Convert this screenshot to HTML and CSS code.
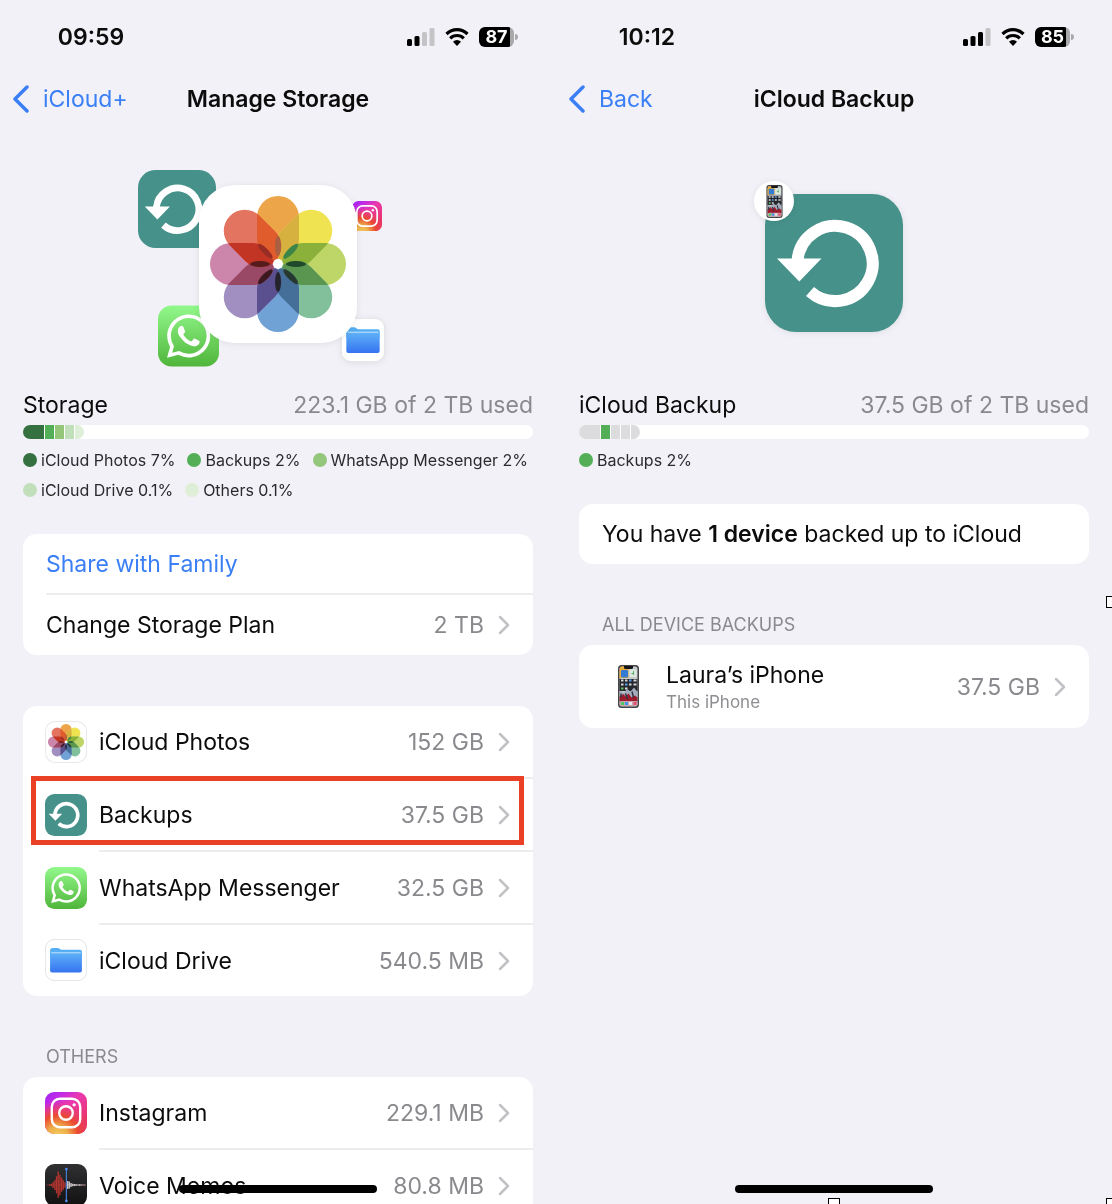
FILE: index.html
```html
<!DOCTYPE html>
<html lang="en">
<head>
    <meta charset="utf-8">
    <meta name="viewport" content="width=device-width, initial-scale=1">
    <title>iCloud Storage</title>
    <link rel="stylesheet" href="styles.css">
</head>
<body>
    <!-- shared icons -->
    <svg class="sprite" width="0" height="0" aria-hidden="true">
        <defs>
            <linearGradient id="wa-green" x1="0" y1="0" x2="0" y2="1">
                <stop offset="0" stop-color="#92f88b"/>
                <stop offset="1" stop-color="#50b53a"/>
            </linearGradient>
            <linearGradient id="folder-blue" x1="0" y1="0" x2="0" y2="1">
                <stop offset="0" stop-color="#62b5f8"/>
                <stop offset="1" stop-color="#3573f0"/>
            </linearGradient>
            <linearGradient id="ig-base" x1="0" y1="0" x2="0.7" y2="0.9">
                <stop offset="0" stop-color="#9a22f5"/>
                <stop offset="0.25" stop-color="#c32ae6"/>
                <stop offset="0.5" stop-color="#ea39ae"/>
                <stop offset="1" stop-color="#ea3462"/>
            </linearGradient>
            <radialGradient id="ig-glow" cx="0.3" cy="1.05" r="0.85">
                <stop offset="0" stop-color="#f3cb5c"/>
                <stop offset="0.28" stop-color="#eeb04c"/>
                <stop offset="0.58" stop-color="#ea4a30"/>
                <stop offset="1" stop-color="#ea3a70" stop-opacity="0"/>
            </radialGradient>
            <linearGradient id="memo-black" x1="0" y1="0" x2="0" y2="1">
                <stop offset="0" stop-color="#303032"/>
                <stop offset="1" stop-color="#111112"/>
            </linearGradient>
            <clipPath id="next-petal">
                <rect x="-21" y="-68" width="42" height="64" rx="21" transform="rotate(45)"/>
            </clipPath>
            <symbol id="photos" viewBox="0 0 158 158">
                <rect width="158" height="158" rx="36" fill="#fff"/>
                <g transform="translate(79 79)">
                    <rect x="-21" y="-68" width="42" height="64" rx="21" fill="#eda549"/>
                    <rect x="-21" y="-68" width="42" height="64" rx="21" fill="#f0e352" transform="rotate(45)"/>
                    <rect x="-21" y="-68" width="42" height="64" rx="21" fill="#bdd667" transform="rotate(90)"/>
                    <rect x="-21" y="-68" width="42" height="64" rx="21" fill="#82c09b" transform="rotate(135)"/>
                    <rect x="-21" y="-68" width="42" height="64" rx="21" fill="#70a2d6" transform="rotate(180)"/>
                    <rect x="-21" y="-68" width="42" height="64" rx="21" fill="#a08fc0" transform="rotate(225)"/>
                    <rect x="-21" y="-68" width="42" height="64" rx="21" fill="#cd86ab" transform="rotate(270)"/>
                    <rect x="-21" y="-68" width="42" height="64" rx="21" fill="#e37460" transform="rotate(315)"/>
                    <!-- where neighbouring petals overlap -->
                    <g clip-path="url(#next-petal)"><rect x="-21" y="-68" width="42" height="64" rx="21" fill="#d6b13f"/></g>
                    <g clip-path="url(#next-petal)" transform="rotate(45)"><rect x="-21" y="-68" width="42" height="64" rx="21" fill="#8bb13b"/></g>
                    <g clip-path="url(#next-petal)" transform="rotate(90)"><rect x="-21" y="-68" width="42" height="64" rx="21" fill="#5a9650"/></g>
                    <g clip-path="url(#next-petal)" transform="rotate(135)"><rect x="-21" y="-68" width="42" height="64" rx="21" fill="#456e98"/></g>
                    <g clip-path="url(#next-petal)" transform="rotate(180)"><rect x="-21" y="-68" width="42" height="64" rx="21" fill="#5a5090"/></g>
                    <g clip-path="url(#next-petal)" transform="rotate(225)"><rect x="-21" y="-68" width="42" height="64" rx="21" fill="#994866"/></g>
                    <g clip-path="url(#next-petal)" transform="rotate(270)"><rect x="-21" y="-68" width="42" height="64" rx="21" fill="#c23423"/></g>
                    <g clip-path="url(#next-petal)" transform="rotate(315)"><rect x="-21" y="-68" width="42" height="64" rx="21" fill="#e05c2c"/></g>
                    <ellipse cy="-18" rx="3" ry="10" fill="#a85f42"/>
                    <ellipse cy="-18" rx="3" ry="10" fill="#3c8448" transform="rotate(45)"/>
                    <ellipse cy="-18" rx="3" ry="10" fill="#1f4a2c" transform="rotate(90)"/>
                    <ellipse cy="-18" rx="3" ry="10" fill="#27382f" transform="rotate(135)"/>
                    <ellipse cy="-18" rx="3" ry="10" fill="#25242e" transform="rotate(180)"/>
                    <ellipse cy="-18" rx="3" ry="10" fill="#3c1820" transform="rotate(225)"/>
                    <ellipse cy="-18" rx="3" ry="10" fill="#561c1c" transform="rotate(270)"/>
                    <ellipse cy="-18" rx="3" ry="10" fill="#9a2c26" transform="rotate(315)"/>
                </g>
                <circle cx="79" cy="79" r="5" fill="#fff"/>
            </symbol>
            <symbol id="backups" viewBox="0 0 138 138">
                <rect width="138" height="138" rx="31" fill="#46928b"/>
                <path d="M32.6 66A37.6 37.6 0 1 1 45 97.5" fill="none" stroke="#fff" stroke-width="12"/>
                <path d="M12 64.5H56.500L34.300 87.500Z" fill="#fff"/>
            </symbol>
            <symbol id="whatsapp" viewBox="0 0 184 184">
                <rect width="184" height="184" rx="41" fill="url(#wa-green)"/>
                <path transform="translate(27 27) scale(5.45)" fill="#fff" d="M17.472 14.382c-.297-.149-1.758-.867-2.03-.967-.273-.099-.471-.148-.67.15-.197.297-.767.966-.94 1.164-.173.199-.347.223-.644.075-.297-.15-1.255-.463-2.39-1.475-.883-.788-1.48-1.761-1.653-2.059-.173-.297-.018-.458.13-.606.134-.133.298-.347.446-.52.149-.174.198-.298.298-.497.099-.198.05-.371-.025-.52-.075-.149-.669-1.612-.916-2.207-.242-.579-.487-.5-.669-.51-.173-.008-.371-.01-.57-.01-.198 0-.52.074-.792.372-.272.297-1.04 1.016-1.04 2.479 0 1.462 1.065 2.875 1.213 3.074.149.198 2.096 3.2 5.077 4.487.709.306 1.262.489 1.694.625.712.227 1.36.195 1.871.118.571-.085 1.758-.719 2.006-1.413.248-.694.248-1.289.173-1.413-.074-.124-.272-.198-.57-.347m-5.421 7.403h-.004a9.87 9.87 0 01-5.031-1.378l-.361-.214-3.741.982.998-3.648-.235-.374a9.86 9.86 0 01-1.51-5.26c.001-5.45 4.436-9.884 9.888-9.884 2.64 0 5.122 1.03 6.988 2.898a9.825 9.825 0 012.893 6.994c-.003 5.45-4.437 9.884-9.885 9.884m8.413-18.297A11.815 11.815 0 0012.05 0C5.495 0 .16 5.335.157 11.892c0 2.096.547 4.142 1.588 5.945L.057 24l6.305-1.654a11.882 11.882 0 005.683 1.448h.005c6.554 0 11.89-5.335 11.893-11.893a11.821 11.821 0 00-3.48-8.413z"/>
            </symbol>
            <symbol id="files" viewBox="0 0 132 132">
                <rect x="1" y="1" width="130" height="130" rx="30" fill="#fff" stroke="#e2e2e6" stroke-width="3"/>
                <path d="M16 36q0-8 8-8h15q4 0 7 3t7 3h57q6 0 6 6v20H16Z" fill="#55aef3"/>
                <path d="M16 40H116V99q0 6-6 6H22q-6 0-6-6Z" fill="url(#folder-blue)"/>
                <path d="M20 43H112" stroke="#a8d6fb" stroke-width="4"/>
            </symbol>
            <symbol id="instagram" viewBox="0 0 124 124">
                <rect width="124" height="124" rx="27" fill="url(#ig-base)"/>
                <rect width="124" height="124" rx="27" fill="url(#ig-glow)"/>
                <rect x="20" y="20" width="84" height="84" rx="24" fill="none" stroke="#fff" stroke-width="7"/>
                <circle cx="62" cy="62" r="20" fill="none" stroke="#fff" stroke-width="7"/>
                <circle cx="86" cy="38" r="5" fill="#fff"/>
            </symbol>
            <symbol id="memos" viewBox="0 0 124 124">
                <rect width="124" height="124" rx="27" fill="url(#memo-black)"/>
                <path d="M4 62H120" stroke="#8b3b38" stroke-width="2"/>
                <path d="M14 60v4M19 58v8M24 53v18M29 47v30M34 36v50M39 22v78M44 32v60M49 40v42M54 48v28M59 54v16" stroke="#b6342f" stroke-width="4"/>
                <path d="M67 50v24M72 52v20M77 56v12M82 58v8M87 59v6M92 60v4M97 61v2M102 60v4M107 61v2" stroke="#c4c4c6" stroke-width="4"/>
                <path d="M66 62H120" stroke="#c4c4c6" stroke-width="2"/>
                <path d="M63 15V109" stroke="#4d8df0" stroke-width="3"/>
                <circle cx="63" cy="15" r="4" fill="#4d8df0"/>
                <circle cx="63" cy="109" r="4" fill="#4d8df0"/>
            </symbol>
            <symbol id="phone" viewBox="0 0 42 86">
                <rect width="42" height="86" rx="7" fill="#454548"/>
                <rect x="3" y="3" width="36" height="80" rx="5" fill="#c5ccca"/>
                <path d="M3 9q0-6 6-6h12v23H3Z" fill="#e9a93b"/>
                <rect x="6" y="10" width="14" height="15" rx="2" fill="#347bd4"/>
                <rect x="23" y="9" width="14" height="15" rx="2" fill="#dfe9e0"/>
                <path d="M27 17h5M31 12v8" stroke="#52b063" stroke-width="2"/>
                <rect x="3" y="28" width="36" height="24" fill="#24272c"/>
                <path d="M6 31h5M14 31h5M31 31h6M6 39h5M22 39h5M31 39h6M14 47h5" stroke="#d8d8dc" stroke-width="4"/>
                <path d="M22 31h5M14 39h5" stroke="#5c9ee8" stroke-width="4"/>
                <path d="M6 47h5" stroke="#58be5f" stroke-width="4"/>
                <path d="M3 52l9 4 6-8 7 5 7-8 7 9v20H3Z" fill="#a3adbd"/>
                <path d="M3 63l8-5 4 5 6-6 6 8 7-4 5 4v8H3Z" fill="#9c1c2e"/>
                <path d="M15 57l4 11M28 53l3 12M6 57v8" stroke="#333740" stroke-width="3"/>
                <rect x="3" y="72" width="36" height="10" rx="4" fill="#c7a6ae"/>
                <path d="M6 77h6" stroke="#4fcb62" stroke-width="6"/>
                <path d="M14 77h6" stroke="#4396ea" stroke-width="6"/>
                <path d="M22 77h6" stroke="#e8e8ed" stroke-width="6"/>
                <path d="M31 77h6" stroke="#e64f70" stroke-width="6"/>
                <path d="M12 2h18v3q0 3-3 3H15q-3 0-3-3Z" fill="#161618"/>
            </symbol>
            <symbol id="wifi" viewBox="0 0 24 20">
                <path d="M1.5 7a15 15 0 0 1 21 0M5.2 11.3a9.6 9.6 0 0 1 13.6 0" fill="none" stroke="#000" stroke-width="3.2"/>
                <path d="M12 19l-4-4.2a5.6 5.6 0 0 1 8 0Z" fill="#000"/>
            </symbol>
            <symbol id="chevron" viewBox="0 0 12 20">
                <path d="M2 2L10 10L2 18" fill="none" stroke="#c2c2c6" stroke-width="2.5" stroke-linecap="round" stroke-linejoin="round"/>
            </symbol>
            <symbol id="back" viewBox="0 0 17 28">
                <path d="M15 2L3 14L15 26" fill="none" stroke="#3a7ff6" stroke-width="3.5" stroke-linecap="round" stroke-linejoin="round"/>
            </symbol>
        </defs>
    </svg>

    <div class="screens">
        <main class="screen">
            <div class="status-bar">
                <span class="time">09:59</span>
                <div class="status-icons">
                    <svg class="signal" viewBox="0 0 28 20">
                        <rect x="0" y="12" width="5" height="7" rx="1.5" fill="#000"/>
                        <rect x="7.5" y="9" width="5" height="10" rx="1.5" fill="#000"/>
                        <rect x="15" y="5" width="5" height="14" rx="1.5" fill="#c4c4c6"/>
                        <rect x="22.5" y="1" width="5" height="18" rx="1.5" fill="#c4c4c6"/>
                    </svg>
                    <svg class="wifi"><use href="#wifi"/></svg>
                    <span class="battery">87</span>
                </div>
            </div>

            <header class="nav">
                <a class="nav-back" href="#"><svg class="back-icon"><use href="#back"/></svg>iCloud+</a>
                <h1 class="nav-title">Manage Storage</h1>
            </header>

            <svg class="hero" width="280" height="200" viewBox="0 0 280 200" aria-hidden="true">
                <use href="#backups" x="0" y="2" width="78" height="78"/>
                <use href="#whatsapp" x="20" y="137" width="61" height="62"/>
                <use href="#instagram" x="214" y="33" width="30" height="30"/>
                <use class="soft-shadow" href="#files" x="203" y="150" width="44" height="44"/>
                <use class="soft-shadow" href="#photos" x="61" y="17" width="158" height="158"/>
            </svg>

            <section class="usage">
                <div class="usage-head">
                    <h2 class="usage-title">Storage</h2>
                    <span class="value">223.1 GB of 2 TB used</span>
                </div>
                <div class="usage-bar">
                    <span class="segment large photos-color"></span>
                    <span class="segment backups-color"></span>
                    <span class="segment whatsapp-color"></span>
                    <span class="segment drive-color"></span>
                    <span class="segment others-color"></span>
                </div>
                <ul class="legend">
                    <li><span class="dot photos-color"></span>iCloud Photos 7%</li>
                    <li><span class="dot backups-color"></span>Backups 2%</li>
                    <li><span class="dot whatsapp-color"></span>WhatsApp Messenger 2%</li>
                    <li><span class="dot drive-color"></span>iCloud Drive 0.1%</li>
                    <li><span class="dot others-color"></span>Others 0.1%</li>
                </ul>
            </section>

            <nav class="card plan">
                <a class="row compact" href="#"><span class="row-body"><span class="label blue">Share with Family</span></span></a>
                <a class="row compact" href="#"><span class="row-body"><span class="label">Change Storage Plan</span><span class="value">2 TB</span><svg class="chevron"><use href="#chevron"/></svg></span></a>
            </nav>

            <nav class="card apps">
                <a class="row" href="#">
                    <svg class="app-icon outlined"><use href="#photos"/></svg>
                    <span class="row-body"><span class="label">iCloud Photos</span><span class="value">152 GB</span><svg class="chevron"><use href="#chevron"/></svg></span>
                </a>
                <a class="row highlighted" href="#">
                    <svg class="app-icon"><use href="#backups"/></svg>
                    <span class="row-body"><span class="label">Backups</span><span class="value">37.5 GB</span><svg class="chevron"><use href="#chevron"/></svg></span>
                </a>
                <a class="row" href="#">
                    <svg class="app-icon"><use href="#whatsapp"/></svg>
                    <span class="row-body"><span class="label">WhatsApp Messenger</span><span class="value">32.5 GB</span><svg class="chevron"><use href="#chevron"/></svg></span>
                </a>
                <a class="row" href="#">
                    <svg class="app-icon"><use href="#files"/></svg>
                    <span class="row-body"><span class="label">iCloud Drive</span><span class="value">540.5 MB</span><svg class="chevron"><use href="#chevron"/></svg></span>
                </a>
            </nav>

            <h3 class="group-title">OTHERS</h3>
            <nav class="card">
                <a class="row" href="#">
                    <svg class="app-icon"><use href="#instagram"/></svg>
                    <span class="row-body"><span class="label">Instagram</span><span class="value">229.1 MB</span><svg class="chevron"><use href="#chevron"/></svg></span>
                </a>
                <a class="row" href="#">
                    <svg class="app-icon"><use href="#memos"/></svg>
                    <span class="row-body"><span class="label">Voice Memos</span><span class="value">80.8 MB</span><svg class="chevron"><use href="#chevron"/></svg></span>
                </a>
            </nav>
            <div class="home-indicator"></div>
        </main>

        <main class="screen">
            <div class="status-bar">
                <span class="time">10:12</span>
                <div class="status-icons">
                    <svg class="signal" viewBox="0 0 28 20">
                        <rect x="0" y="12" width="5" height="7" rx="1.5" fill="#000"/>
                        <rect x="7.5" y="9" width="5" height="10" rx="1.5" fill="#000"/>
                        <rect x="15" y="5" width="5" height="14" rx="1.5" fill="#000"/>
                        <rect x="22.5" y="1" width="5" height="18" rx="1.5" fill="#c4c4c6"/>
                    </svg>
                    <svg class="wifi"><use href="#wifi"/></svg>
                    <span class="battery">85</span>
                </div>
            </div>

            <header class="nav">
                <a class="nav-back" href="#"><svg class="back-icon"><use href="#back"/></svg>Back</a>
                <h1 class="nav-title">iCloud Backup</h1>
            </header>

            <svg class="hero" width="180" height="200" viewBox="0 0 180 200" aria-hidden="true">
                <use class="soft-shadow" href="#backups" x="21" y="26" width="138" height="138"/>
                <circle class="soft-shadow" cx="30" cy="33" r="20" fill="#fff"/>
                <use href="#phone" x="22" y="17" width="17" height="33"/>
            </svg>

            <section class="usage">
                <div class="usage-head">
                    <h2 class="usage-title">iCloud Backup</h2>
                    <span class="value">37.5 GB of 2 TB used</span>
                </div>
                <div class="usage-bar">
                    <span class="segment large"></span>
                    <span class="segment backups-color"></span>
                    <span class="segment"></span>
                    <span class="segment"></span>
                    <span class="segment"></span>
                </div>
                <ul class="legend">
                    <li><span class="dot backups-color"></span>Backups 2%</li>
                </ul>
            </section>

            <p class="card message">You have <strong>1 device</strong> backed up to iCloud</p>

            <h3 class="group-title">ALL DEVICE BACKUPS</h3>
            <nav class="card">
                <a class="row device" href="#">
                    <svg class="device-icon"><use href="#phone"/></svg>
                    <span class="row-body">
                        <span class="label">Laura’s iPhone<small>This iPhone</small></span>
                        <span class="value">37.5 GB</span>
                        <svg class="chevron"><use href="#chevron"/></svg>
                    </span>
                </a>
            </nav>
            <div class="home-indicator"></div>
        </main>

        <span class="handle handle-right"></span>
        <span class="handle handle-bottom"></span>
        <span class="handle handle-corner"></span>
    </div>
</body>
</html>
```
FILE: styles.css
```css
* {
    box-sizing: border-box;
}

body {
    margin: 0;
    background-color: #f2f1f7;
    color: #0c0c0d;
    font-family: Inter, "Liberation Sans", sans-serif;
    font-size: 23px;
    line-height: 30px;
}

a {
    color: inherit;
    text-decoration: none;
}

h1, h2, h3, p, ul {
    margin: 0;
    padding: 0;
}

svg {
    display: block;
    flex: none;
}

.sprite {
    position: absolute;
}

.screens {
    position: relative;
    display: flex;
    height: 100vh;
    overflow: hidden;
}

.screen {
    position: relative;
    flex: 1;
    min-width: 0;
    padding: 0 23px;
}

/* status bar */
.status-bar {
    display: flex;
    align-items: center;
    justify-content: space-between;
    height: 74px;
    padding: 0 15px 0 34px;
}

.time {
    width: 68px;
    text-align: center;
    font-weight: 600;
}

.status-icons {
    display: flex;
    align-items: center;
    gap: 10px;
}

.signal {
    width: 28px;
    height: 20px;
}

.wifi {
    width: 24px;
    height: 20px;
}

.battery {
    position: relative;
    width: 35px;
    margin-right: 4px;
    border-radius: 6px;
    background: linear-gradient(to right, #000 88%, #a9a9ac 88%);
    color: #fff;
    font-size: 18px;
    font-weight: 700;
    line-height: 20px;
    text-align: center;
}

.battery::after {
    content: "";
    position: absolute;
    top: 7px;
    right: -4px;
    width: 3px;
    height: 6px;
    border-radius: 0 3px 3px 0;
    background-color: #a9a9ac;
}

/* navigation */
.nav {
    display: grid;
    grid-template-columns: 1fr auto 1fr;
    align-items: center;
    height: 50px;
    margin: 0 -11px;
}

.nav-back {
    display: flex;
    align-items: center;
    gap: 14px;
    color: #3a7ff6;
}

.back-icon {
    width: 17px;
    height: 28px;
}

.nav-title {
    font-size: 23px;
    font-weight: 600;
}

.hero {
    margin: 44px auto 22px;
    overflow: visible;
}

.soft-shadow {
    filter: drop-shadow(0 1px 3px rgba(0, 0, 0, 0.08));
}

/* storage usage */
.usage-head {
    display: flex;
    justify-content: space-between;
}

.usage-title {
    font-size: 23px;
    font-weight: 400;
}

.value {
    color: #8a8a8e;
    white-space: nowrap;
}

.usage-bar {
    display: flex;
    gap: 1px;
    height: 14px;
    margin-top: 5px;
    border-radius: 7px;
    background-color: #fff;
    overflow: hidden;
}

.segment {
    width: 9px;
    background-color: #dcdcde;
}

.segment.large {
    width: 21px;
}

.segment:last-child {
    border-radius: 0 7px 7px 0;
}

.legend {
    display: flex;
    flex-wrap: wrap;
    gap: 10px 12px;
    margin-top: 11px;
    list-style: none;
    font-size: 16px;
    line-height: 20px;
}

.legend li {
    display: flex;
    align-items: center;
    gap: 4px;
    color: #2b2b2d;
}

.dot {
    width: 14px;
    height: 14px;
    border-radius: 50%;
}

.photos-color {
    background-color: #357040;
}

.backups-color {
    background-color: #53ae58;
}

.whatsapp-color {
    background-color: #94c67c;
}

.drive-color {
    background-color: #c1dfba;
}

.others-color {
    background-color: #deeed7;
}

/* cards and rows */
.card {
    border-radius: 14px;
    background-color: #fff;
}

.plan {
    margin-top: 34px;
}

.apps {
    margin-top: 51px;
}

.row {
    position: relative;
    display: flex;
    align-items: center;
    gap: 12px;
    padding-left: 22px;
}

.row.compact {
    padding-left: 23px;
}

.row-body {
    flex: 1;
    display: flex;
    align-items: center;
    min-width: 0;
    min-height: 73px;
    padding-right: 23px;
    border-bottom: 2px solid #ededf0;
}

.row.compact .row-body {
    min-height: 61px;
}

.row:last-child .row-body {
    min-height: 71px;
    border-bottom: none;
}

.row.compact:last-child .row-body {
    min-height: 60px;
}

.label {
    flex: 1;
}

.blue {
    color: #3a7ff6;
}

.app-icon {
    width: 42px;
    height: 42px;
    margin-bottom: 2px;
}

.outlined {
    border-radius: 10px;
    box-shadow: inset 0 0 0 1px #e8e8eb;
}

.outlined use {
    mix-blend-mode: multiply;
}

.chevron {
    width: 12px;
    height: 20px;
    margin-left: 14px;
}

.highlighted::after {
    content: "";
    position: absolute;
    top: -3px;
    right: 9px;
    bottom: 7px;
    left: 8px;
    border: 5px solid #ea4025;
}

.group-title {
    margin: 49px 23px 8px;
    color: #8a8a8e;
    font-size: 18px;
    font-weight: 400;
    line-height: 24px;
}

.message {
    margin-top: 34px;
    padding: 15px 23px;
}

.message strong {
    font-weight: 600;
}

.row.device {
    gap: 27px;
    padding-left: 39px;
}

.row.device .row-body {
    min-height: 83px;
}

.device-icon {
    width: 21px;
    height: 43px;
}

.device small {
    display: block;
    color: #8e8e92;
    font-size: 17px;
    line-height: 24px;
}

.home-indicator {
    position: absolute;
    bottom: 11px;
    left: 50%;
    width: 198px;
    height: 8px;
    margin-left: -99px;
    border-radius: 4px;
    background-color: #000;
}

/* selection handles */
.handle {
    position: absolute;
    width: 12px;
    height: 12px;
    border: 1px solid #000;
    background-color: #fff;
}

.handle-right {
    top: 50%;
    right: -6px;
    margin-top: -6px;
}

.handle-bottom {
    bottom: -6px;
    left: 75%;
    margin-left: -6px;
}

.handle-corner {
    right: -6px;
    bottom: -6px;
}
```
